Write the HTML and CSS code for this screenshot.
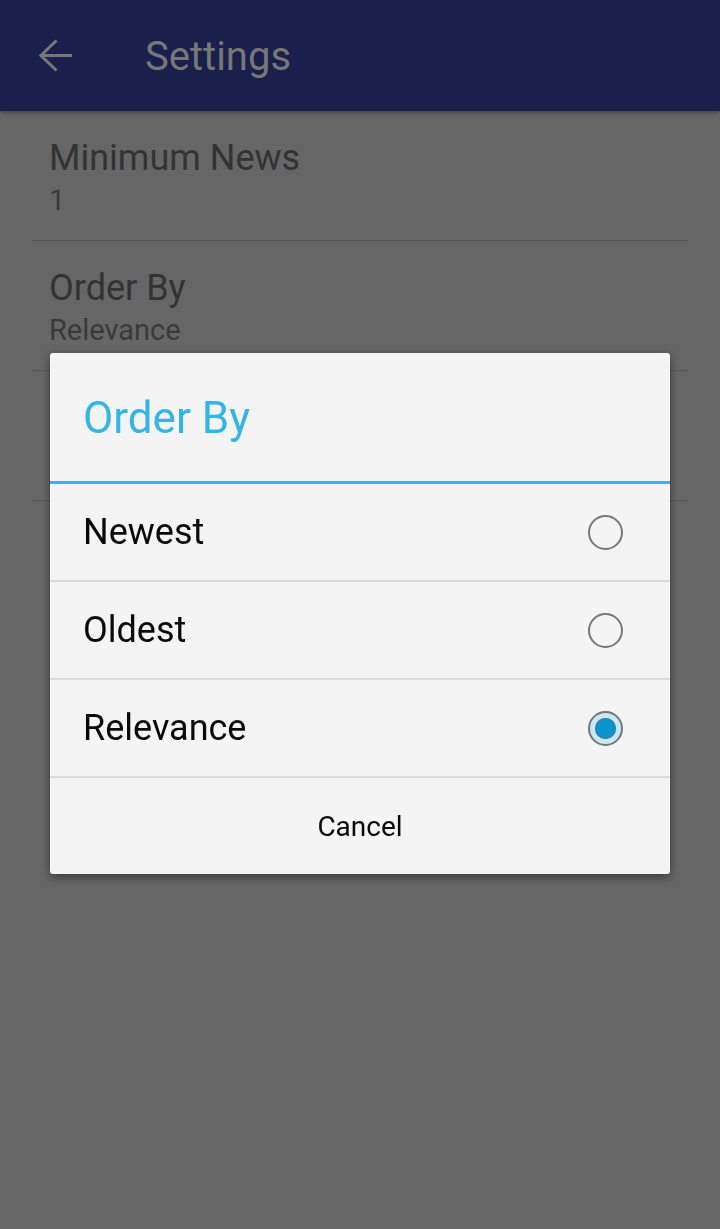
FILE: index.html
```html
<!DOCTYPE html>
<html lang="en">
	<head>
		<meta charset="UTF-8" />
		<meta name="viewport" content="width=device-width, initial-scale=1.0" />
		<title>Settings</title>

		<link rel="stylesheet" href="styles.css">
	</head>
	<body>
		<div class="toolbar">
			<svg class="back" width="35" height="33" viewBox="0 0 35 33">
				<path d="M2 16.5H33M17.5 1.5L2 16.5L17.5 31.5" fill="none" stroke="#777" stroke-width="3" />
			</svg>
			<span class="toolbar-title">Settings</span>
		</div>

		<ul class="prefs">
			<li class="pref">
				<div class="pref-title">Minimum News</div>
				<div class="pref-summary">1</div>
			</li>
			<li class="pref">
				<div class="pref-title">Order By</div>
				<div class="pref-summary">Relevance</div>
			</li>
			<!-- third preference sits fully under the dialog -->
			<li class="pref"></li>
		</ul>

		<div class="overlay">
			<div class="dialog">
				<div class="dialog-title">Order By</div>
				<ul class="choices">
					<li class="choice">
						<span>Newest</span>
						<span class="radio"></span>
					</li>
					<li class="choice">
						<span>Oldest</span>
						<span class="radio"></span>
					</li>
					<li class="choice">
						<span>Relevance</span>
						<span class="radio checked"></span>
					</li>
				</ul>
				<div class="cancel">Cancel</div>
			</div>
		</div>
	</body>
</html>
```

FILE: styles.css
```css
body {
	margin: 0;
	background-color: #666666;
	font-family: Roboto, "Noto Sans", sans-serif;
	height: 1229px;
	overflow: hidden;
}

.toolbar {
	height: 111px;
	background-color: #1a1f4c;
	display: flex;
	align-items: center;
	box-shadow: 0 2px 4px rgba(0, 0, 0, 0.35);
	position: relative;
}

.back {
	margin-left: 39px;
	margin-top: 0;
}

.toolbar-title {
	color: #777777;
	font-size: 40px;
	margin-left: 71px;
	margin-top: 2px;
}

.prefs {
	list-style: none;
	margin: 0 32px;
	padding: 0;
}

.pref {
	height: 130px;
	border-bottom: 1px solid #555555;
	padding-left: 17px;
	box-sizing: border-box;
}

.pref-title {
	color: #333333;
	font-size: 36px;
	padding-top: 27px;
	line-height: 40px;
}

.pref-summary {
	color: #3a3a3a;
	font-size: 29px;
	line-height: 32px;
	margin-top: 6px;
}

.overlay {
	position: fixed;
	top: 0;
	left: 0;
	right: 0;
	bottom: 0;
	display: flex;
	align-items: center;
	justify-content: center;
}

.dialog {
	width: 620px;
	margin-top: -2px;
	background-color: #f4f4f4;
	border-radius: 3px;
	box-shadow: 0 3px 10px rgba(0, 0, 0, 0.45);
}

.dialog-title {
	height: 131px;
	box-sizing: border-box;
	padding: 40px 0 0 33px;
	color: #33b5e5;
	font-size: 44px;
	line-height: 50px;
	border-bottom: 3px solid #33b5e5;
}

.choices {
	list-style: none;
	margin: 0;
	padding: 0;
}

.choice {
	height: 98px;
	display: flex;
	align-items: center;
	justify-content: space-between;
	padding: 0 47px 0 33px;
	border-bottom: 2px solid #dddddd;
	box-sizing: border-box;
	font-size: 36px;
	color: #0a0a0a;
}

.radio {
	width: 35px;
	height: 35px;
	border: 2px solid #777777;
	border-radius: 50%;
	box-sizing: border-box;
	position: relative;
	margin-top: 1px;
}

.radio.checked {
	background-color: #c8e8f4;
}

.radio.checked::after {
	content: "";
	position: absolute;
	top: 5px;
	left: 5px;
	width: 21px;
	height: 21px;
	border-radius: 50%;
	background-color: #0a93cd;
	box-shadow: inset 0 0 0 1px #4a7e98;
}

.cancel {
	height: 96px;
	display: flex;
	align-items: center;
	justify-content: center;
	font-size: 28px;
	color: #0a0a0a;
}
```
